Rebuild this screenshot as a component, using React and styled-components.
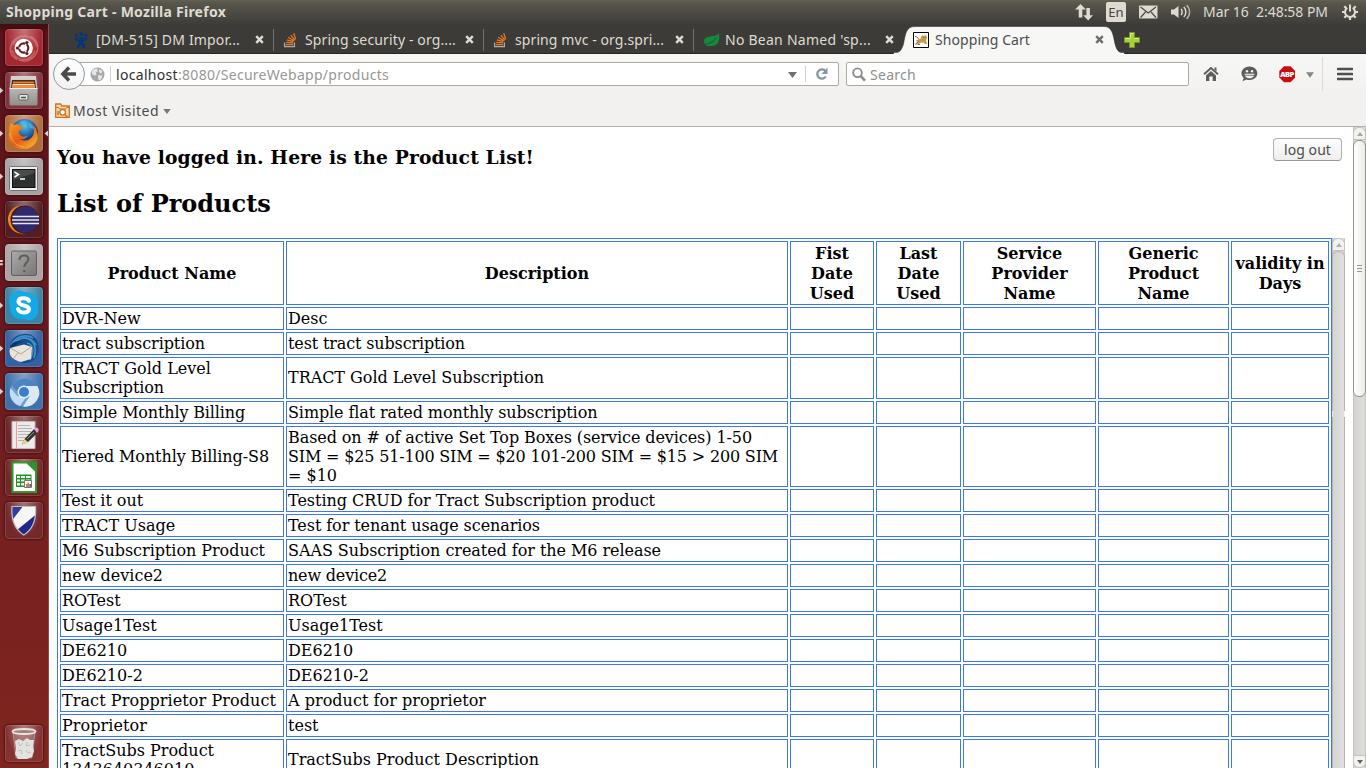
import React, { useLayoutEffect, useRef, useState } from "react";
import styled, { createGlobalStyle, css } from "styled-components";

const GlobalStyle = createGlobalStyle`
  * { box-sizing: border-box; }
  html, body { margin: 0; padding: 0; overflow: hidden; background: #fff; }
  body { font-family: "Noto Sans", "Open Sans", sans-serif; }
`;

const Screen = styled.div`
  width: 1366px;
  height: 768px;
  display: flex;
  flex-direction: column;
  overflow: hidden;
`;

/* Text that is spread evenly over a known width */
const FitBox = styled.span`
  display: inline-block;
  flex: none;
  width: ${(p) => p.$width}px;
  white-space: pre;
  vertical-align: top;
`;

function Fit({ width, children }) {
  const ref = useRef(null);
  const [spacing, setSpacing] = useState(0);
  useLayoutEffect(() => {
    const el = ref.current;
    el.style.letterSpacing = "0px";
    const natural = el.getBoundingClientRect().width;
    const next = (width - natural) / children.length;
    el.style.letterSpacing = `${next}px`;
    setSpacing(next);
  }, [width, children]);
  return (
    <FitBox $width={width}>
      <span ref={ref} style={{ letterSpacing: `${spacing}px` }}>{children}</span>
    </FitBox>
  );
}

/* ---------- top panel ---------- */

const TopPanel = styled.header`
  height: 24px;
  flex: none;
  display: flex;
  align-items: center;
  justify-content: space-between;
  padding: 0 8px 0 6px;
  background: linear-gradient(#66634f 0, #5a574f 2px, #3e3d39 100%);
  color: #dfdbd2;
  font-size: 14px;
  line-height: 24px;
`;

const WindowTitle = styled.div`
  font-weight: 700;
  height: 24px;
`;

const Indicators = styled.div`
  display: flex;
  align-items: center;
  height: 24px;
`;

const Indicator = styled.div`
  display: flex;
  margin-right: ${(p) => p.$gap}px;
`;

const LanguageBadge = styled.div`
  width: 20px;
  height: 20px;
  border-radius: 2px;
  background: #dfdbd2;
  color: #45433e;
  font-size: 13px;
  line-height: 20px;
  text-align: center;
  margin-right: 13px;
`;

const Clock = styled.div`
  height: 24px;
  margin-right: 14px;
`;

/* ---------- launcher ---------- */

const Body = styled.div`
  flex: 1;
  display: flex;
  min-height: 0;
`;

const Launcher = styled.nav`
  width: 49px;
  flex: none;
  display: flex;
  flex-direction: column;
  gap: 6px;
  padding: 5px 0 6px;
  border-right: 1px solid #9b4a45;
  background: linear-gradient(#3f0e10 0, #58121a 9px, #5f151b 25%, #741f20 62%, #80251f 100%);
`;

const LauncherItem = styled.div`
  display: flex;
  align-items: center;
  height: 37px;
  flex: none;
  margin-top: ${(p) => (p.$last ? "auto" : 0)};
`;

const Pip = styled.svg`
  width: 5px;
  height: 9px;
  flex: none;
`;

const Tile = styled.div`
  width: 38px;
  height: 37px;
  border-radius: 4px;
  background: ${(p) => `radial-gradient(ellipse at 50% 0, rgba(255,255,255,.38), rgba(255,255,255,.04) 68%), ${p.$bg}`};
  box-shadow: inset 0 0 0 1px rgba(255, 255, 255, 0.13), 0 0 2px 1px rgba(30, 0, 0, 0.45);
  svg { display: block; }
`;

/* ---------- browser ---------- */

const Browser = styled.main`
  flex: 1;
  min-width: 0;
  display: flex;
  flex-direction: column;
  color: #4c4c4c;
  font-size: 14px;
`;

const TabStrip = styled.div`
  height: 30px;
  flex: none;
  display: flex;
  padding-left: 14px;
  background: #3c3b37;
  border-bottom: 1px solid #272623;
`;

const Tab = styled.div`
  position: relative;
  width: 210px;
  height: 30px;
  flex: none;
  display: flex;
  align-items: center;
  padding: 1px 8px 0 10px;
  line-height: 20px;
  color: ${(p) => (p.$active ? "#4c4c4c" : "#dfdbd2")};
  ${(p) => p.$divider && css`
    &::after {
      content: "";
      position: absolute;
      right: -1px;
      top: 5px;
      width: 1px;
      height: 22px;
      background: #74716b;
    }
  `}
`;

const TabShape = styled.svg`
  position: absolute;
  left: -10px;
  top: 0;
`;

const TabIcon = styled.div`
  position: relative;
  width: 16px;
  height: 16px;
  margin-right: ${(p) => p.$gap}px;
  svg { display: block; }
`;

const TabTitle = styled.div`
  position: relative;
  flex: 1;
  height: 20px;
  white-space: nowrap;
`;

const CloseIcon = styled.svg`
  position: relative;
  width: 9px;
  height: 9px;
  margin-right: 1px;
`;

const NewTab = styled.div`
  position: relative;
  padding: 8px 0 0 11px;
`;

const NavBar = styled.div`
  height: 40px;
  flex: none;
  display: flex;
  align-items: center;
  background: linear-gradient(#f7f7f6, #f2f1ef);
`;

const BackButton = styled.div`
  position: relative;
  width: 32px;
  height: 32px;
  flex: none;
  margin-left: 4px;
  border-radius: 50%;
  border: 1px solid #8f98a6;
  background: linear-gradient(#fff, #f2f2f2);
`;

const Field = styled.div`
  height: 24px;
  display: flex;
  align-items: center;
  border: 1px solid #aca8a2;
  border-radius: 2px;
  background: #fff;
  line-height: 22px;
`;

const UrlField = styled(Field)`
  width: 770px;
  margin-left: -16px;
  padding-left: 20px;
`;

const SearchField = styled(Field)`
  width: 343px;
  margin-left: 7px;
  padding-left: 5px;
  color: #8f8f8f;
`;

const Rule = styled.div`
  width: 1px;
  height: ${(p) => p.$height}px;
  background: ${(p) => p.$color || "#cfcfcf"};
  margin: 0 ${(p) => p.$right}px 0 ${(p) => p.$left}px;
`;

const UrlText = styled.div`
  flex: 1;
  display: flex;
  padding-top: 2px;
  color: #979797;
`;

const Host = styled.span`
  color: #2f2f2f;
`;

const ReloadSlot = styled.div`
  width: 16px;
  display: flex;
  margin-right: 8px;
`;

const ToolIcon = styled.div`
  display: flex;
  width: ${(p) => p.$width}px;
  margin-left: ${(p) => p.$left}px;
  padding-top: ${(p) => p.$drop || 0}px;
  svg { display: block; }
`;

const BookmarksBar = styled.div`
  height: 33px;
  flex: none;
  display: flex;
  align-items: center;
  padding: 1px 0 0 6px;
  background: #f2f1ef;
  border-bottom: 1px solid #b4b0aa;
  line-height: 20px;
`;

/* ---------- page ---------- */

const Viewport = styled.div`
  flex: 1;
  min-height: 0;
  display: flex;
`;

const Page = styled.section`
  width: 1304px;
  padding: 19px 8px 0;
  background: #fff;
  color: #000;
  font-family: "DejaVu Serif", serif;
  overflow: hidden;
`;

const PageHead = styled.div`
  display: flex;
  justify-content: space-between;
  height: 22px;
`;

const Greeting = styled.h3`
  margin: 0;
  font-size: 18.72px;
  line-height: 22px;
`;

const Title = styled.h2`
  margin: 22px 0 20px;
  font-size: 24px;
  line-height: 28px;
`;

const LogoutButton = styled.button`
  width: 69px;
  height: 23px;
  margin: -8px 3px 0 0;
  padding: 0 0 0 10px;
  border: 1px solid #b3afa9;
  border-bottom-color: #9a9690;
  border-radius: 4px;
  background: linear-gradient(#fdfdfd, #efeeed);
  color: #4c4c4c;
  font: 14px/20px "Noto Sans", sans-serif;
  text-align: left;
`;

const ListFrame = styled.div`
  display: flex;
  width: 1288px;
  height: 530px;
  overflow: hidden;
`;

const Table = styled.table`
  width: 1275px;
  flex: none;
  table-layout: fixed;
  border: 1px solid #3b78f5;
  border-collapse: separate;
  border-spacing: 2px;
  align-self: flex-start;
  font-size: 16px;
  line-height: 19px;
`;

const Head = styled.th`
  height: 64px;
  padding: 2px 1px 0;
  border: 1px solid #3b78f5;
  line-height: 20px;
`;

const HeadText = styled.span`
  white-space: pre;
`;

const Cell = styled.td`
  height: 23px;
  padding: 1px 1px ${(p) => (p.$raised ? 2 : 1)}px;
  border: 1px solid #3b78f5;
`;

const Line = styled.div`
  height: 19px;
  white-space: nowrap;
`;

const Scrollbar = styled.div`
  width: 13px;
  flex: none;
  display: flex;
  flex-direction: column;
  background: linear-gradient(90deg, #b5b1ac 0, #d4d2d0 1px, #e0dedc 11px, #c4c1bd 13px);
`;

const ScrollButton = styled.div`
  height: 13px;
  flex: none;
  display: flex;
  align-items: center;
  justify-content: center;
  margin-top: ${(p) => (p.$down ? "auto" : 0)};
  border: 1px solid #c6c2be;
  border-radius: ${(p) => (p.$down ? "0 0 6px 6px" : "6px 6px 0 0")};
  background: #f3f2f1;
`;

const Thumb = styled.div`
  height: 257px;
  flex: none;
  display: flex;
  align-items: center;
  justify-content: center;
  border: 1px solid #96928d;
  border-radius: 6px;
  background: linear-gradient(90deg, #fff, #ecebe9);
`;

const Trough = styled.div`
  height: ${(p) => p.$height}px;
  flex: none;
  border: solid #b8b5b0;
  border-width: ${(p) => (p.$round ? "1px 1px 0" : "0 1px")};
  border-radius: ${(p) => (p.$round ? "6px 6px 0 0" : 0)};
  background: linear-gradient(90deg, #d6d4d2, #e2e0de);
`;

const TroughSeam = styled.div`
  height: 6px;
  flex: none;
  background: linear-gradient(90deg, #eeedec 0 1px, #d8d6d4 1px, #e2e0de 12px, #f4f3f2 12px);
`;

/* ---------- drawings ---------- */

const Triangle = ({ color = "#6f6f6f", w = 9, h = 6, up = false }) => (
  <svg width={w} height={h} viewBox="0 0 9 6"><path d={up ? "M0 6h9L4.5 0z" : "M0 0h9L4.5 6z"} fill={color} /></svg>
);

const Close = ({ color }) => (
  <CloseIcon viewBox="0 0 9 9"><path d="M1.2 1.2 7.8 7.8M7.8 1.2 1.2 7.8" stroke={color} strokeWidth="2.5" /></CloseIcon>
);

const JiraIcon = () => (
  <svg width="16" height="16" fill="none" stroke="#04377a">
    <g fill="#04377a" stroke="none"><circle cx="8" cy="1.900" r="1.900" /><circle cx="3.200" cy="3.200" r="1.500" /><circle cx="12.800" cy="3.200" r="1.500" /></g>
    <path d="M2.500 5.800c1 2.700 3.500 2.200 5.500 4.400 1.800 2 2.800 3.500 3 5.800M13.500 5.800c-1 2.700-3.500 2.200-5.500 4.400-1.800 2-2.800 3.500-3 5.800" strokeWidth="2.600" />
    <path d="M6 4.800 8 7.200l2-2.400" strokeWidth="1.800" />
  </svg>
);

const StackIcon = () => (
  <svg width="16" height="16" fill="none">
    <path d="M1.600 10.500v4.200h9.800v-4.200" stroke="#a9acaf" strokeWidth="1.300" />
    <path d="M3 12.600h7M3.200 10.300l6.800.5M3.800 7.800l6.500 1.900M5.200 5.200l5.700 3.500M7.800 3.100l4.100 5.200M10.700 1.200l2 6" stroke="#e87922" strokeWidth="1.300" />
  </svg>
);

const LeafIcon = () => (
  <svg width="17" height="16">
    <path d="M15.800 1.200c1.400 4.800.6 12-6.300 12.800-2.700.3-5-.3-6.200-.2C-.2 10.500.2 5.700 5.200 4.700c4.300-.9 8.600-.5 10.600-3.500z" fill="#118a3b" />
    <path d="M2.500 12.300c4.500-.8 8.500-2.700 11-6.800" stroke="#3c3b37" strokeWidth=".8" fill="none" />
  </svg>
);

const CatIcon = () => (
  <svg width="16" height="16">
    <path d="M.5.5h15v15H.5z" fill="#fff" stroke="#000" />
    <path d="M3 8.500 7.500 6.800 9 3l1.500 1L13 3l1 3-1 2.500 1 3.500h-2l-1.500-1.500L8 10.500 5 12.500H2l2.500-2z" fill="#c99648" />
    <path d="M2 4.500h1.500L6 7.500M2 12.500l3-2.500M10 5.500h.8M12 5.500h.6M5 12.500h2" stroke="#6a6256" strokeWidth=".9" fill="none" />
  </svg>
);

const tabs = [
  { title: "[DM-515] DM Impor...", width: 144, gap: 7, icon: <JiraIcon />, divider: true },
  { title: "Spring security - org....", width: 151, gap: 6, icon: <StackIcon />, divider: true },
  { title: "spring mvc - org.spri...", width: 149, gap: 6, icon: <StackIcon />, divider: true },
  { title: "No Bean Named 'sp...", width: 146, gap: 6, icon: <LeafIcon /> },
];

const launcherIcons = {
  ubuntu: (
    <svg width="38" height="37" fill="none">
      <path d="M7 27C2 14 13 5 25 8M12 31C0 23 5 10 17 7M31 12c6 12-5 23-17 19M26 7c12 8 7 21-5 24M8 16C14 3 29 5 32 18M30 22C24 34 10 33 7 21" stroke="#f6b0ae" strokeOpacity=".38" strokeWidth="1.400" />
      <circle cx="18.700" cy="19" r="9.200" fill="#fff" />
      <circle cx="18.700" cy="19" r="4.600" stroke="#6d171c" strokeWidth="2.100" />
      <path d="m18.700 19-7 0M18.700 19l3.500-6M18.700 19l3.500 6" stroke="#fff" strokeWidth="1.300" />
      <circle cx="18.700" cy="19" r="2.800" fill="#fff" />
      <g fill="#6d171c"><circle cx="12.400" cy="19" r="1.600" /><circle cx="21.900" cy="13.500" r="1.600" /><circle cx="21.900" cy="24.500" r="1.600" /></g>
    </svg>
  ),
  files: (
    <svg width="38" height="37">
      <defs><linearGradient id="cab" x2="0" y2="1"><stop stopColor="#d7d6d3" /><stop offset="1" stopColor="#8f8e8b" /></linearGradient></defs>
      <path d="M6 4h25l1.500 13v15a1.500 1.500 0 0 1-1.500 1.500H6A1.500 1.500 0 0 1 4.500 32V17z" fill="url(#cab)" />
      <path d="M7 8h23l1 8H6z" fill="#4d2b18" />
      <path d="M8 9.500h21v2H8z" fill="#e97b2b" /><path d="M7.500 12h22v1H7.500z" fill="#fff0d8" /><path d="M7 13h23v3H7z" fill="#ef8b3e" />
      <path d="M4.500 16.500h28" stroke="#eee" /><rect x="14" y="22.500" width="9" height="5.500" rx="1" fill="#e6e5e3" stroke="#5f5e5c" /><path d="M16 25.500h5" stroke="#4c4b49" strokeWidth="1.500" />
    </svg>
  ),
  firefox: (
    <svg width="38" height="37">
      <defs><radialGradient id="sea" cx=".5" cy=".25"><stop stopColor="#56c7ef" /><stop offset="1" stopColor="#123f86" /></radialGradient>
        <linearGradient id="fox" x2="1" y2="1"><stop stopColor="#f7a51f" /><stop offset=".5" stopColor="#e45a14" /><stop offset="1" stopColor="#fbc72c" /></linearGradient></defs>
      <circle cx="19.500" cy="17.500" r="13.500" fill="url(#sea)" />
      <path d="M15 7c2-2 6-2 7 0l-2 3-4 1zM23 8c3 0 6 3 6 6l-4-1z" fill="#52b5e4" opacity=".7" />
      <path d="M6 8c1 1 2 2 3 2 2-1 5-1 6 1 1 0 3 0 3 2-2 2-5 2-4 5 2 5 7 4 9 2-1 3-4 5-8 4 6 4 14 0 14-8 0-3-1-5-2-6 4 2 4 3 5 7 3 9-4 17-13 17C8 34 2 27 4 17c0-4 1-6 2-9z" fill="url(#fox)" />
      <path d="M5 18c1 8 6 13 14 14" stroke="#fff0a0" strokeOpacity=".4" fill="none" />
    </svg>
  ),
  terminal: (
    <svg width="38" height="37">
      <rect x="4.500" y="8.500" width="28" height="24" rx="1" fill="#eee" stroke="#777571" />
      <rect x="7.500" y="11.500" width="22.500" height="18" fill="#2d3030" stroke="#111" />
      <path d="M8 12h21.500v3L8 22z" fill="#555957" opacity=".7" />
      <path d="m9.500 14 4 2.500-4 2.500M15 21h5" stroke="#fff" strokeWidth="1.500" fill="none" />
    </svg>
  ),
  eclipse: (
    <svg width="38" height="37">
      <circle cx="17" cy="18.500" r="14" fill="#ef8a1f" /><circle cx="19.500" cy="18.500" r="14" fill="#4a171d" />
      <circle cx="20.500" cy="18.500" r="13" fill="#302a6c" />
      <path d="M7.500 15.500h26.500M7 19h27M7.500 22.500h26.500" stroke="#e7e6f4" strokeWidth="1.600" />
    </svg>
  ),
  unknown: (
    <svg width="38" height="37">
      <defs><linearGradient id="unk" x2="1" y2="1"><stop stopColor="#aaa" /><stop offset="1" stopColor="#777674" /></linearGradient></defs>
      <rect x="6.500" y="7" width="25" height="24.500" rx="1.500" fill="url(#unk)" stroke="#62605f" />
      <path d="M14.500 16c0-6 9-6 9-.8 0 3.200-4.300 3.600-4.300 7.800M19.200 26v2" stroke="#5e5c5b" strokeWidth="2" fill="none" />
    </svg>
  ),
  skype: (
    <svg width="38" height="37">
      <path d="M10 5c4-2 7-1 9 0 9-1 16 6 14 15 1 4 0 7-1 9-4 5-8 5-12 3C10 34 4 27 5 18 3 12 5 7 10 5z" fill="#13a8e6" />
      <path d="M24 13.800c-1-3.300-10.500-4-10.500.7 0 5 10.500 3 10.500 7.600 0 5-10 4.200-11-.2" stroke="#fff" strokeWidth="4" fill="none" strokeLinecap="round" />
    </svg>
  ),
  thunderbird: (
    <svg width="38" height="37">
      <path d="M5 14C8 5 20 1 28 6c7 5 8 16 1 24-6 4-11 4-14 2L6 26z" fill="#174c8d" />
      <path d="M6 15C12 5 21 4 28 8M9 13c9-9 18-5 22 2M18 8c9 0 15 7 11 20M22 13c7 2 7 8 3 17" stroke="#4090cc" strokeWidth="1.700" fill="none" />
      <path d="m5 18 14-3.500 8 2.500-1 12-10 3C8 30 3 26 5 18z" fill="#ebe4da" />
      <path d="m5 18 11 6 10-7M8 29l5-6" stroke="#b0a798" fill="none" />
      <path d="M5 18c1-6 7-8 13-6-3 0-5 1-7 3z" fill="#0e3467" />
    </svg>
  ),
  chromium: (
    <svg width="38" height="37">
      <circle cx="19" cy="19.500" r="14" fill="#6d9fd6" />
      <path d="M5.500 15a14 14 0 0 0 9.500 18l5.500-8-8-2z" fill="#c5dcf2" />
      <path d="M19 13h13.500A14 14 0 0 1 18 33.500l6.500-10z" fill="#dbe9f7" />
      <path d="M7 12.500c6-9 20-9 25.500.5H19c-4 0-6 3-6.500 6z" fill="#4c84c3" />
      <circle cx="19" cy="19" r="6.500" fill="#e2eefa" /><circle cx="19" cy="19" r="5" fill="#397fce" />
    </svg>
  ),
  editor: (
    <svg width="38" height="37">
      <path d="M7 5.500h23v27H7z" fill="#ecebea" stroke="#bdbab7" />
      <path d="M11.500 5.500v27" stroke="#ec9a9a" />
      <path d="M13 9.500h12M13 12.500h14M13 15.500h13M13 18.500h12M13 21.500h9M13 24.500h6" stroke="#b5b4b3" />
      <path d="m17 28.500 3-6L29 13l4 3.500-10 9.500z" fill="#343434" /><path d="m29 13 2-1.500c2 0 3 1.500 2.500 3.500L32 17z" fill="#e2a6d8" /><path d="m17 28.500 2.500-5.500 4 3.500z" fill="#ead37c" /><path d="M22 23 29 16" stroke="#898989" />
    </svg>
  ),
  calc: (
    <svg width="38" height="37">
      <path d="M7.500 3.500H22L31 12v21H7.500z" fill="#fff" stroke="#2e9a2b" strokeWidth="2" /><path d="M22 2.500h10V12z" fill="#2f9230" />
      <path d="M11 15.500h15.500V28H11z" fill="#2e8a2d" />
      <path d="M12 17h3v2h-3zm4 0h4v2h-4zm5 0h4.500v2H21zM12 20.500h3v2h-3zm4 0h4v2h-4zm5 0h4.500v2H21zM12 24h3v2.500h-3zm4 0h4v2.500h-4z" fill="#eef8e9" />
      <path d="M19.500 21.500h7v7h-7z" fill="#fff" stroke="#777" /><path d="M21 25h1.500v3H21zM22.500 23.500H24V28h-1.500z" fill="#e8762c" /><path d="M24.300 25H26v3h-1.700z" fill="#3d6fc1" />
    </svg>
  ),
  shield: (
    <svg width="38" height="37">
      <defs><clipPath id="sh"><path d="M7 4.500h23.500C31.500 18 27 28 18.800 33 10.500 28 6 18 7 4.500z" /></clipPath></defs>
      <g clipPath="url(#sh)"><path d="M5 3h28v32H5z" fill="#f6f6f6" /><path d="M5 3h14L5 21z" fill="#333e9c" /><path d="M34 10v24H15l-3-6z" fill="#20298a" /></g>
      <path d="M7 4.500h23.500C31.500 18 27 28 18.800 33 10.500 28 6 18 7 4.500z" fill="none" stroke="#c0c0c0" strokeWidth="1.200" />
    </svg>
  ),
  trash: (
    <svg width="38" height="37">
      <path d="m8 7 3 26h16l3-26z" fill="#fff" fillOpacity=".16" stroke="#ddd" strokeOpacity=".4" />
      <path d="m10 16 4-2 4 2 4-3 3 2 4 0-1 6 1 5-2 6-5 2H13l-3-5 1-5z" fill="#e2e2e0" />
      <path d="m13 17 2 4 3-3M22 17l-1 4 4-1M13 26l3-1 1 4M21 25l2 3 3-1" stroke="#c0bfbc" fill="none" />
      <ellipse cx="19" cy="6.500" rx="11.500" ry="2.500" fill="#a3807c" stroke="#e6e4df" strokeWidth="1.800" />
    </svg>
  ),
};

const launcher = [
  { id: "ubuntu", bg: "#a01f26" },
  { id: "files", bg: "#7c2a35", open: 1 },
  { id: "firefox", bg: "#ad6733", open: 1, focused: true },
  { id: "terminal", bg: "#a3a09f", open: 1 },
  { id: "eclipse", bg: "#4b141a" },
  { id: "unknown", bg: "#aaa1a1", open: 2 },
  { id: "skype", bg: "#347f9f", open: 1 },
  { id: "thunderbird", bg: "#2c5b9e", open: 1 },
  { id: "chromium", bg: "#376ba8", open: 1 },
  { id: "editor", bg: "#661c20" },
  { id: "calc", bg: "#6b1e1f" },
  { id: "shield", bg: "#6d2023" },
  { id: "trash", bg: "#7f2928", last: true },
];

const columns = [
  ["Product Name", 224], ["Description", 502], ["Fist\nDate\nUsed", 84], ["Last\nDate\nUsed", 85],
  ["Service\nProvider\nName", 133], ["Generic\nProduct\nName", 131], ["validity in\nDays", 98],
];

/* A line is a plain string, or [string, width] where the line is spread to a width */
const products = [
  [["DVR-New"], ["Desc"]],
  [[["tract subscription", 143]], [["test tract subscription", 177]]],
  [["TRACT Gold Level", ["Subscription", 102]], [["TRACT Gold Level Subscription", 256]]],
  [[["Simple Monthly Billing", 183]], [["Simple flat rated monthly subscription", 309]]],
  [[["Tiered Monthly Billing-S8", 207]], [
    ["Based on # of active Set Top Boxes (service devices) 1-50", 464],
    ["SIM = $25 51-100 SIM = $20 101-200 SIM = $15 > 200 SIM", 490],
    "= $10",
  ]],
  [[["Test it out", 81]], [["Testing CRUD for Tract Subscription product", 367]]],
  [["TRACT Usage"], [["Test for tenant usage scenarios", 252]]],
  [[["M6 Subscription Product", 203]], [["SAAS Subscription created for the M6 release", 373]]],
  [["new device2"], [["new device2", 99]]],
  [["ROTest"], ["ROTest"]],
  [["Usage1Test"], ["Usage1Test"]],
  [["DE6210"], ["DE6210"]],
  [["DE6210-2"], ["DE6210-2"]],
  [[["Tract Propprietor Product", 214]], [["A product for proprietor", 198]]],
  [[["Proprietor", 85]], ["test"]],
  [["TractSubs Product", "1343640346010"], [["TractSubs Product Description", 251]]],
];

const Col = styled.col`
  width: ${(p) => p.$width}px;
`;

const Lines = ({ lines }) =>
  lines.map((line, i) => (
    <Line key={i}>{Array.isArray(line) ? <Fit width={line[1]}>{line[0]}</Fit> : line}</Line>
  ));

function ProductTable() {
  return (
    <Table>
      <colgroup>{columns.map(([name, w]) => <Col key={name} $width={w} />)}</colgroup>
      <thead><tr>{columns.map(([name]) => <Head key={name}><HeadText>{name}</HeadText></Head>)}</tr></thead>
      <tbody>
        {products.map(([name, description], i) => (
          <tr key={i}>
            <Cell><Lines lines={name} /></Cell>
            <Cell $raised={name.length === 2}><Lines lines={description} /></Cell>
            <Cell /><Cell /><Cell /><Cell /><Cell />
          </tr>
        ))}
      </tbody>
    </Table>
  );
}

function Panel() {
  return (
    <TopPanel>
      <WindowTitle><Fit width={220}>Shopping Cart - Mozilla Firefox</Fit></WindowTitle>
      <Indicators>
        <Indicator $gap={13}>
          <svg width="18" height="18" fill="#dfdbd2"><path d="M5.500 1 11 6.500H7.300v8H3.700v-8H0zM13.200 17.500 18 12.300h-3.100V5h-3.500v7.300H8.200z" /></svg>
        </Indicator>
        <LanguageBadge>En</LanguageBadge>
        <Indicator $gap={13}>
          <svg width="19" height="14"><rect y=".5" width="18.500" height="13" rx="1" fill="#dfdbd2" /><path d="m1.500 2 7.700 6 7.700-6M1.500 12.500l5-5.500M17 12.500 12 7" stroke="#4b4944" strokeWidth="1.200" fill="none" /></svg>
        </Indicator>
        <Indicator $gap={12}>
          <svg width="20" height="18" fill="none" stroke="#dfdbd2" strokeWidth="1.500"><path d="M0 6.500h3L7.500 3v12L3 11.500H0z" fill="#dfdbd2" stroke="none" /><path d="M10 6c1.500 1.500 1.500 4.500 0 6M12.800 4c2.700 2.500 2.700 7.500 0 10" /><path d="M15.600 2c4 4 4 10 0 14" opacity=".7" /></svg>
        </Indicator>
        <Clock><Fit width={125}>Mar 16  2:48:58 PM</Fit></Clock>
        <svg width="16" height="16" fill="none" stroke="#dfdbd2">
          <path d="M5.200 3.800a5 5 0 1 0 5.600 0" strokeWidth="2" /><path d="M8 .5v7" strokeWidth="2" />
          <path d="m2.300 2.300 2 2M13.700 2.300l-2 2M0 8h3M16 8h-3M2.300 13.700l2-2M13.700 13.700l-2-2M8 16v-3" strokeWidth="2.200" />
        </svg>
      </Indicators>
    </TopPanel>
  );
}

function Dock() {
  return (
    <Launcher>
      {launcher.map(({ id, bg, open, focused, last }) => (
        <LauncherItem key={id} $last={last}>
          <Pip viewBox="0 0 5 9" fill="#d9cfcf">
            {open === 1 && <path d="M0 1.500 3.300 4.500 0 7.500z" />}
            {open === 2 && <path d="M0 2h2.800v2H0zM0 5.300h2.800v2H0z" />}
          </Pip>
          <Tile $bg={bg}>{launcherIcons[id]}</Tile>
          {focused && <Pip viewBox="0 0 5 9" fill="#d9cfcf"><path d="M5 1.500 1.500 4.500 5 7.500z" /></Pip>}
        </LauncherItem>
      ))}
    </Launcher>
  );
}

function Tabs() {
  return (
    <TabStrip>
      {tabs.map((t) => (
        <Tab key={t.title} $divider={t.divider}>
          <TabIcon $gap={t.gap}>{t.icon}</TabIcon>
          <TabTitle><Fit width={t.width}>{t.title}</Fit></TabTitle>
          <Close color="#dfdbd2" />
        </Tab>
      ))}
      <Tab $active>
        <TabShape width="234" height="30">
          <path d="M0 29.500C7 29.500 9 25 10.500 20C12.500 10 13 2.500 22 2.500H211C219 2.500 220 10 222 20C223.500 25 225 29.500 232 29.500V31H0z" fill="#f7f7f6" stroke="#272623" strokeOpacity=".5" />
          <path d="M1 29.500h230" stroke="#f7f7f6" strokeWidth="1.500" />
        </TabShape>
        <TabIcon $gap={6}><CatIcon /></TabIcon>
        <TabTitle><Fit width={95}>Shopping Cart</Fit></TabTitle>
        <Close color="#6f6e6b" />
      </Tab>
      <NewTab>
        <svg width="16" height="16"><path d="M5.500.500h5v5h5v5h-5v5h-5v-5h-5v-5h5z" fill="#a9cf3f" stroke="#6f9a22" /><path d="M6.500 5.500v-4h3M1.500 6.500h5M10.500 6.500h4" stroke="#dcf08f" fill="none" /></svg>
      </NewTab>
    </TabStrip>
  );
}

function Navigation() {
  return (
    <NavBar>
      <BackButton>
        <svg width="30" height="30"><path d="M22 15H10M15 8.500 8.800 15l6.200 6.500" stroke="#4a4a4a" strokeWidth="3.400" fill="none" /></svg>
      </BackButton>
      <UrlField>
        <svg width="15" height="15"><circle cx="7.500" cy="7.500" r="7" fill="#a4a6a8" /><path d="M2 4c1-2 3-2 5-2.500L8 4 6 5.500 6.500 8 4 8.500 2 7zM9.500 2l3 2-1.500 3-2-2zM8 8l4.500.5-1.500 4-2.500 1z" fill="#e5e6e7" /></svg>
        <Rule $height={16} $left={5} $right={5} />
        <UrlText><Host><Fit width={62}>localhost</Fit></Host><Fit width={211}>:8080/SecureWebapp/products</Fit></UrlText>
        <ToolIcon $left={0} $drop={2}><Triangle /></ToolIcon>
        <Rule $height={16} $left={8} $right={8} />
        <ReloadSlot>
          <svg width="16" height="16"><path d="M11.500 5.200A4.600 4.600 0 1 0 11.800 10.500" stroke="#8594a5" strokeWidth="2.300" fill="none" /><path d="M13.500 1.500V8H7.500z" fill="#8594a5" /></svg>
        </ReloadSlot>
      </UrlField>
      <SearchField>
        <svg width="14" height="15" fill="none" stroke="#8c8c8c"><circle cx="5.500" cy="5.700" r="4.300" strokeWidth="1.900" /><path d="m8.800 9.200 4.200 4.500" strokeWidth="2.600" /></svg>
        <ToolIcon $left={4} $drop={2}><Fit width={46}>Search</Fit></ToolIcon>
      </SearchField>
      <ToolIcon $width={16} $left={14}>
        <svg width="16" height="16"><path d="M1 8.300 8 2l7 6.300" stroke="#5c5c5c" strokeWidth="1.900" fill="none" /><path d="m8 5 5 4.400V15H9.700v-4.500H6.300V15H3V9.400zM11.500 1.500h2v4l-2-2z" fill="#5c5c5c" /></svg>
      </ToolIcon>
      <ToolIcon $width={17} $left={22}>
        <svg width="17" height="16"><path d="M8.500.5C13 .5 16.300 3.500 16.300 7.300S13 14 8.500 14c-1 0-2-.1-3-.5L1.500 15.200l1.200-3.300C1.300 10.700.5 9 .5 7.300.5 3.500 4 .5 8.500.5z" fill="#5c5c5c" /><circle cx="6" cy="5.200" r="1.200" fill="#f3f3f2" /><circle cx="11" cy="5.200" r="1.200" fill="#f3f3f2" /><path d="M3.500 7.700h10c-.5 3.500-2.500 4.600-5 4.600s-4.500-1.100-5-4.600z" fill="#f3f3f2" /><path d="M4 9.300h9" stroke="#5c5c5c" strokeWidth=".8" /></svg>
      </ToolIcon>
      <ToolIcon $width={16} $left={21}>
        <svg width="17" height="17"><path d="M5 .3h6.500L16.300 5v6.500L11.500 16.300H5L.3 11.500V5z" fill="#c90e0e" /><text x="8.300" y="11.300" fill="#fff" fontFamily="Open Sans" fontSize="7.500" fontWeight="800" textAnchor="middle" textLength="14">ABP</text></svg>
      </ToolIcon>
      <ToolIcon $width={8} $left={11} $drop={2}><Triangle color="#858585" w={8} /></ToolIcon>
      <Rule $height={34} $left={8} $right={14} $color="#dcdad8" />
      <svg width="16" height="14"><path d="M1 2h14M1 7h14M1 12h14" stroke="#4f4f4f" strokeWidth="2.600" strokeLinecap="round" /></svg>
    </NavBar>
  );
}

function Bookmarks() {
  return (
    <BookmarksBar>
      <svg width="15" height="15"><path d="M.7 2V1h5l1 2h7.600v11.300H.7z" fill="#f6d8b3" stroke="#d4701c" strokeWidth="1.300" /><path d="M.7 4.500h3l1 1.500h6l1-1.500H14" stroke="#d4701c" fill="none" /><circle cx="7.700" cy="9.300" r="2.800" fill="#fff" stroke="#d4701c" strokeWidth="1.300" /><path d="m9.500 11 3 3M3 8v4" stroke="#d4701c" strokeWidth="1.500" /></svg>
      <ToolIcon $left={3} $drop={1}><Fit width={86}>Most Visited</Fit></ToolIcon>
      <ToolIcon $left={4} $drop={1}><Triangle color="#7a7875" w={8} h={5} /></ToolIcon>
    </BookmarksBar>
  );
}

export default function App() {
  return (
    <Screen>
      <GlobalStyle />
      <Panel />
      <Body>
        <Dock />
        <Browser>
          <Tabs />
          <Navigation />
          <Bookmarks />
          <Viewport>
            <Page>
              <PageHead>
                <Greeting><Fit width={477}>You have logged in. Here is the Product List!</Fit></Greeting>
                <LogoutButton><Fit width={47}>log out</Fit></LogoutButton>
              </PageHead>
              <Title>List of Products</Title>
              <ListFrame>
                <ProductTable />
                <Scrollbar>
                  <ScrollButton><Triangle up color="#b1aeaa" w={6} h={4} /></ScrollButton>
                  <Trough $round $height={160} />
                  <TroughSeam />
                  <Trough $height={351} />
                </Scrollbar>
              </ListFrame>
            </Page>
            <Scrollbar>
              <ScrollButton><Triangle up color="#aaa7a3" w={6} h={4} /></ScrollButton>
              <Thumb>
                <svg width="5" height="8"><path d="M0 .500h5M0 3.500h5M0 6.500h5" stroke="#9a9793" /></svg>
              </Thumb>
              <ScrollButton $down><Triangle color="#66635f" w={6} h={4} /></ScrollButton>
            </Scrollbar>
          </Viewport>
        </Browser>
      </Body>
    </Screen>
  );
}
